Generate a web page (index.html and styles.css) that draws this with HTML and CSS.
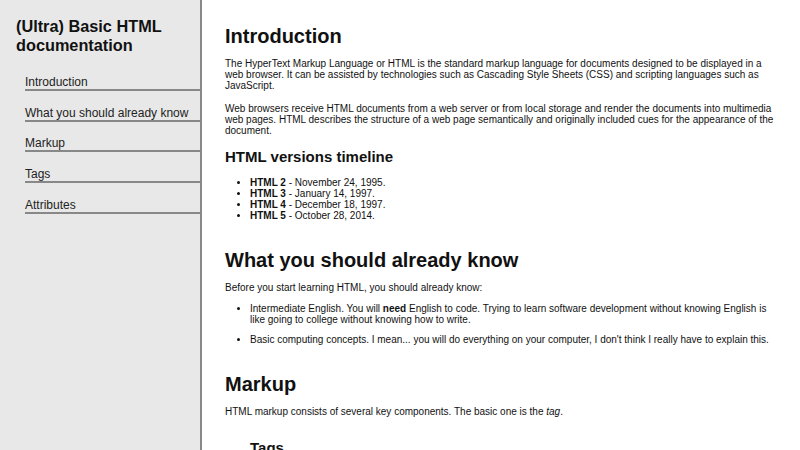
FILE: index.html
```html
<!DOCTYPE html>
<html lang="en">
<head>
<meta charset="utf-8">
<title>(Ultra) Basic HTML documentation</title>
<link rel="stylesheet" href="styles.css">
</head>
<body>
<nav class="navbar">
  <header class="nav-title">(Ultra) Basic HTML documentation</header>
  <ul class="nav-list">
    <li><a class="nav-link" href="#Introduction">Introduction</a></li>
    <li><a class="nav-link" href="#What_you_should_already_know">What you should already know</a></li>
    <li><a class="nav-link" href="#Markup">Markup</a></li>
    <li><a class="nav-link" href="#Tags">Tags</a></li>
    <li><a class="nav-link" href="#Attributes">Attributes</a></li>
  </ul>
</nav>
<main class="main-doc">
  <section class="main-section" id="Introduction">
    <header class="sec-title">Introduction</header>
    <p>The HyperText Markup Language or HTML is the standard markup language for documents designed to be displayed in a web browser. It can be assisted by technologies such as Cascading Style Sheets (CSS) and scripting languages such as JavaScript.</p>
    <p>Web browsers receive HTML documents from a web server or from local storage and render the documents into multimedia web pages. HTML describes the structure of a web page semantically and originally included cues for the appearance of the document.</p>
    <h2 class="sub-title">HTML versions timeline</h2>
    <ul class="versions">
      <li><b>HTML 2</b> - November 24, 1995.</li>
      <li><b>HTML 3</b> - January 14, 1997.</li>
      <li><b>HTML 4</b> - December 18, 1997.</li>
      <li><b>HTML 5</b> - October 28, 2014.</li>
    </ul>
  </section>
  <section class="main-section" id="What_you_should_already_know">
    <header class="sec-title">What you should already know</header>
    <p>Before you start learning HTML, you should already know:</p>
    <ul class="spaced">
      <li>Intermediate English. You will <b>need</b> English to code. Trying to learn software development without knowing English is like going to college without knowing how to write.</li>
      <li>Basic computing concepts. I mean... you will do everything on your computer, I don't think I really have to explain this.</li>
    </ul>
  </section>
  <section class="main-section" id="Markup">
    <header class="sec-title">Markup</header>
    <p>HTML markup consists of several key components. The basic one is the <i>tag</i>.</p>
    <div class="subsection">
      <h2 class="sub-title">Tags</h2>
      <p>HTML tags are used to mark up the start of an HTML element.</p>
    </div>
  </section>
</main>
</body>
</html>
```
FILE: styles.css
```css
html, body {
  margin: 0;
  padding: 0;
}
body {
  font-family: "Liberation Sans", Arial, sans-serif;
  font-size: 10px;
  color: #111;
  background: #fff;
  display: flex;
  height: 100vh;
  overflow: hidden;
}
.navbar {
  flex: 0 0 200px;
  background: #e8e8e8;
  border-right: 2px solid #888;
  height: 100vh;
  box-sizing: content-box;
}
.nav-title {
  display: block;
  font-size: 16.3px;
  font-weight: bold;
  line-height: 19px;
  padding: 17px 10px 0 16px;
}
.nav-list {
  list-style: none;
  margin: 20px 0 0 0;
  padding: 0 0 0 25px;
}
.nav-list li {
  margin-bottom: 14.7px;
}
.nav-link {
  display: block;
  font-size: 12px;
  line-height: 14px;
  color: #222;
  text-decoration: none;
  border-bottom: 2px solid #888;
}
.main-doc {
  flex: 1;
  padding: 0 20px 0 23px;
  min-width: 0;
}
.sec-title {
  display: block;
  font-size: 20px;
  font-weight: bold;
  margin: 28px 0 11px;
  line-height: 22px;
}
.main-section:first-child .sec-title {
  margin-top: 25px;
}
.main-section p {
  margin: 10px 0;
}
.main-section p + p {
  margin-top: 12px;
}
.sub-title {
  font-size: 15px;
  margin: 12px 0 12px;
}
.main-section ul {
  padding-left: 25px;
  margin: 10px 0;
}
.spaced li {
  margin-bottom: 9px;
}
.subsection {
  padding-left: 25px;
  margin-top: 22px;
}
```
